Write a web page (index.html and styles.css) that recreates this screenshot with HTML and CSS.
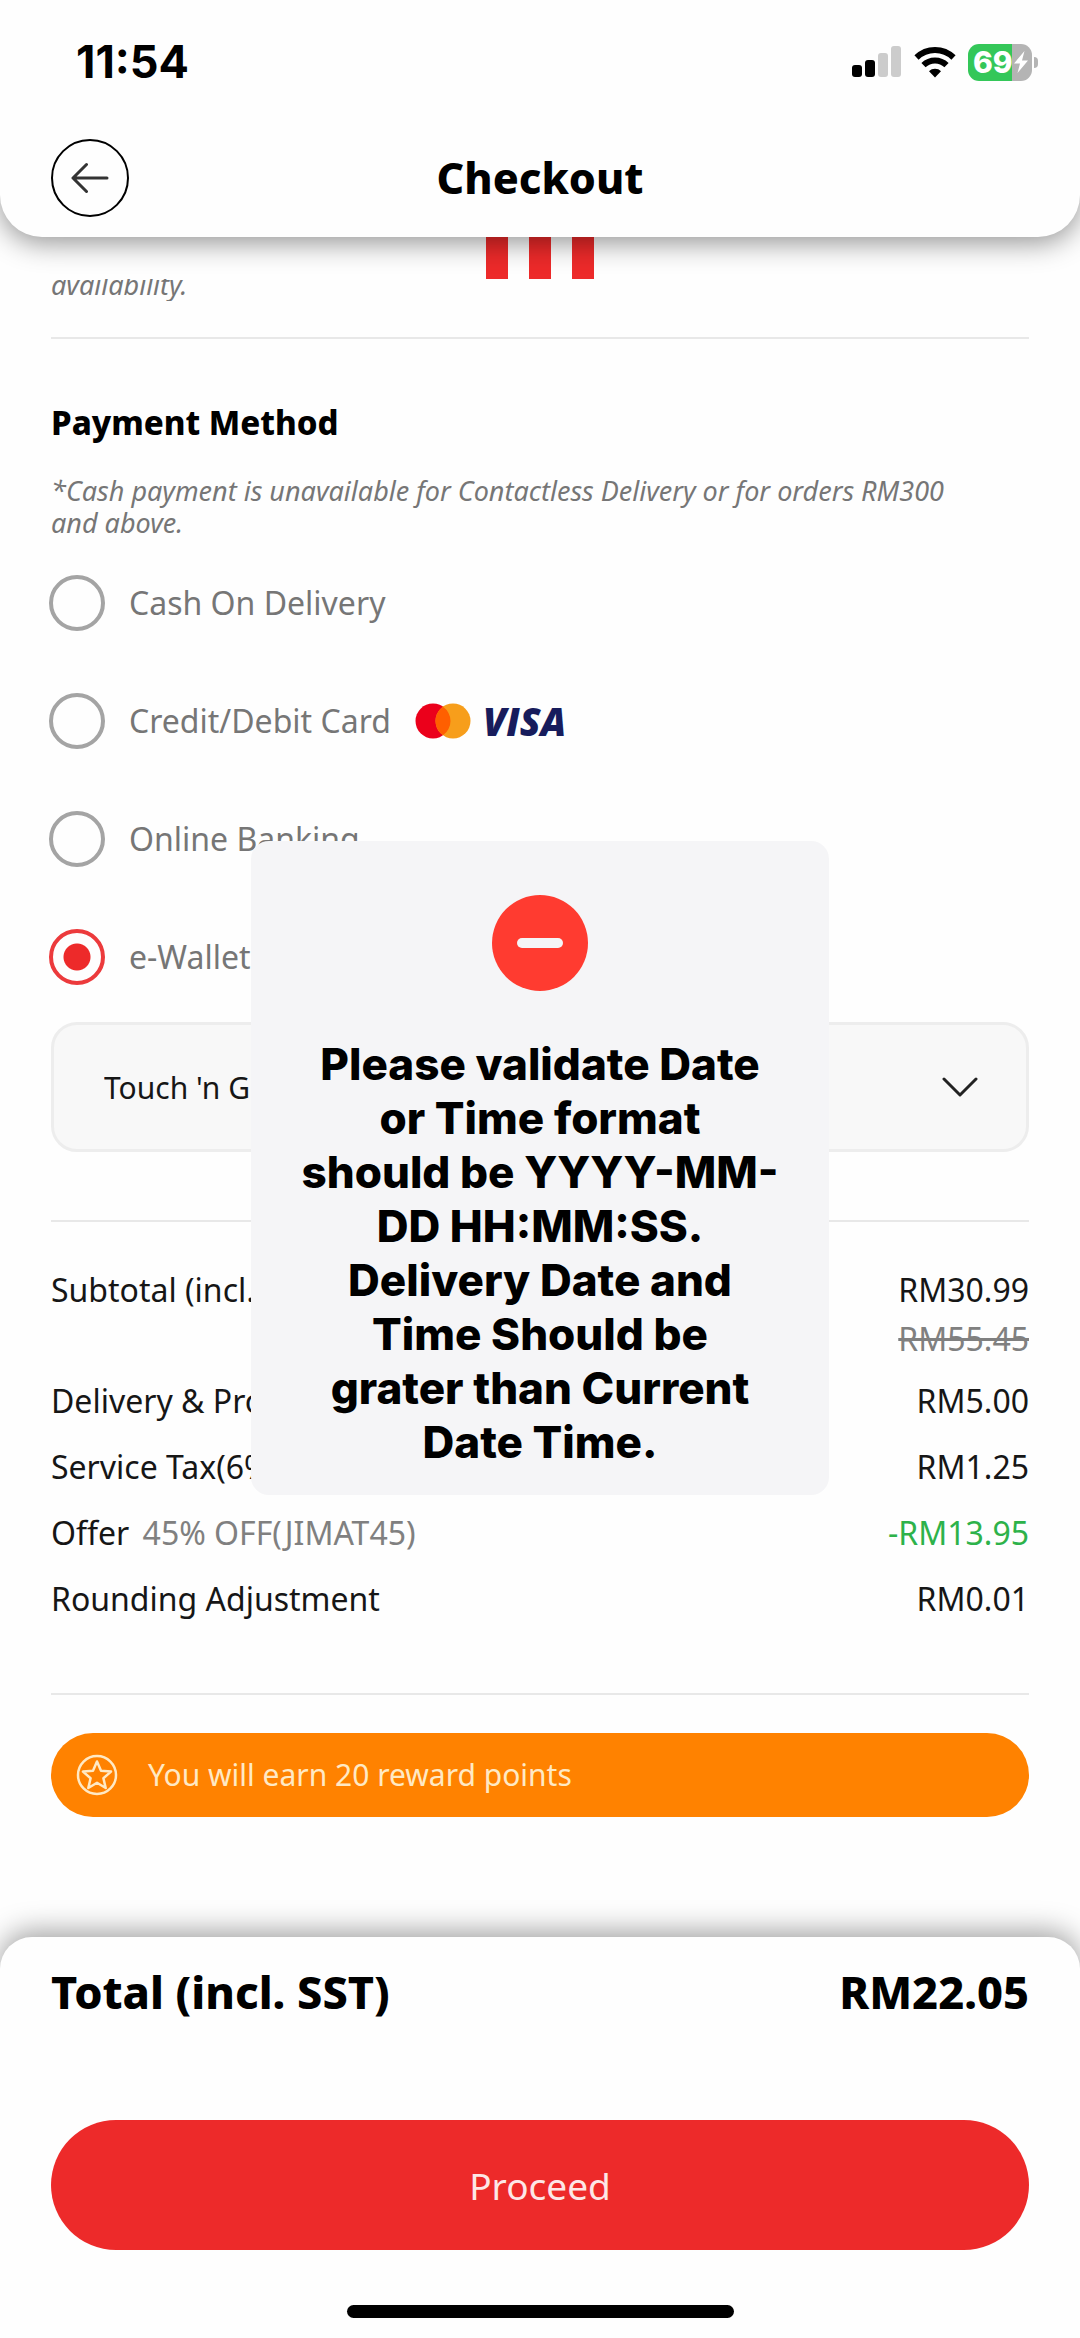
FILE: index.html
```html
<!DOCTYPE html>
<html lang="en">
<head>
<meta charset="utf-8">
<meta name="viewport" content="width=device-width, initial-scale=1">
<title>Checkout</title>
<link rel="stylesheet" href="styles.css">
</head>
<body>
<header class="header">
  <div class="status">
    <span class="time">11:54</span>
    <div class="indicators">
      <svg width="50" height="32" viewBox="0 0 50 32" aria-hidden="true">
        <rect x="0" y="19" width="10" height="12" rx="3"/>
        <rect x="13" y="14" width="10" height="17" rx="3"/>
        <rect x="26" y="7" width="10" height="24" rx="3" fill="#ccc"/>
        <rect x="39" y="0" width="10" height="31" rx="3" fill="#ccc"/>
      </svg>
      <svg class="wifi" width="42" height="32" viewBox="0 0 42 32" aria-hidden="true">
        <g fill="none" stroke="#000" stroke-width="6">
          <path d="M2.500 11.500a26.500 26.500 0 0 1 37 0"/>
          <path d="M9.500 19.200a16.500 16.500 0 0 1 23 0"/>
        </g>
        <path d="M21 31.500l-6-6.300c3-3.300 9-3.300 12 0z"/>
      </svg>
      <div class="battery">
        <span class="battery-level">69</span>
        <svg width="16" height="24" viewBox="0 0 16 24" aria-hidden="true"><path d="M11.500 1L1 13.500h6L4.500 23 15 10.500H9z" fill="#fff"/></svg>
      </div>
    </div>
  </div>
  <div class="titlebar">
    <button class="back" type="button" aria-label="Back">
      <svg width="38" height="32" viewBox="0 0 38 32" fill="none" stroke="#333" stroke-width="3" stroke-linecap="round" stroke-linejoin="round" aria-hidden="true"><path d="M36 16H2M15.500 2.500L2 16l13.500 13.500"/></svg>
    </button>
    <h1 class="title">Checkout</h1>
  </div>
</header>

<main class="content">
  <div class="brand" aria-hidden="true"><i></i><i></i><i></i></div>
  <div class="clipped"><p class="note">availability.</p></div>
  <hr class="rule">

  <section class="payment">
    <h2 class="heading">Payment Method</h2>
    <p class="note">*Cash payment is unavailable for Contactless Delivery or for orders RM300 and above.</p>
    <div class="options">
      <label class="option"><input class="radio" type="radio" name="pay">Cash On Delivery</label>
      <label class="option"><input class="radio" type="radio" name="pay">Credit/Debit Card
        <span class="cards">
          <svg width="56" height="36" viewBox="0 0 56 36" aria-hidden="true">
            <circle cx="18" cy="18" r="17.500" fill="#eb001b"/>
            <circle cx="38" cy="18" r="17.500" fill="#f79e1b"/>
            <path d="M28 3.640a17.500 17.500 0 0 1 0 28.720a17.500 17.500 0 0 1 0-28.720z" fill="#ff5f00"/>
          </svg>
          <span class="visa">VISA</span>
        </span>
      </label>
      <label class="option"><input class="radio" type="radio" name="pay">Online Banking</label>
      <label class="option"><input class="radio" type="radio" name="pay" checked>e-Wallet</label>
    </div>
    <div class="wallet">
      <select class="wallet-select" aria-label="e-Wallet provider"><option>Touch 'n Go eWallet</option></select>
      <svg class="chevron" width="36" height="20" viewBox="0 0 36 20" fill="none" stroke="#222" stroke-width="3" stroke-linecap="round" stroke-linejoin="round" aria-hidden="true"><path d="M2 2l16 16L34 2"/></svg>
    </div>
  </section>
  <hr class="rule">

  <dl class="summary">
    <div class="row"><dt>Subtotal (incl. SST)</dt><dd>RM30.99<s>RM55.45</s></dd></div>
    <div class="row"><dt>Delivery &amp; Processing</dt><dd>RM5.00</dd></div>
    <div class="row"><dt>Service Tax(6%)</dt><dd>RM1.25</dd></div>
    <div class="row"><dt>Offer <span class="muted">45% OFF(JIMAT45)</span></dt><dd class="discount">-RM13.95</dd></div>
    <div class="row"><dt>Rounding Adjustment</dt><dd>RM0.01</dd></div>
  </dl>
  <hr class="rule">

  <p class="reward">
    <svg width="42" height="42" viewBox="0 0 42 42" fill="none" stroke="#ffe9c4" stroke-width="2.500" stroke-linejoin="round" aria-hidden="true"><circle cx="21" cy="21" r="19"/><path d="M21 7.500l4 9.200 10 .9-7.600 6.600 2.300 9.800-8.700-5.200-8.700 5.200 2.300-9.800L7 17.600l10-.9z"/></svg>
    You will earn 20 reward points
  </p>
</main>

<footer class="footer">
  <div class="total"><span>Total (incl. SST)</span><span>RM22.05</span></div>
  <button class="proceed" type="button">Proceed</button>
  <div class="home"></div>
</footer>

<div class="overlay">
  <div class="alert" role="alertdialog" aria-labelledby="alert-text">
    <svg width="96" height="96" viewBox="0 0 96 96" aria-hidden="true"><circle cx="48" cy="48" r="48" fill="#ff3b30"/><rect x="25" y="43" width="46" height="10" rx="5" fill="#f5f5f7"/></svg>
    <p class="alert-text" id="alert-text">Please validate Date or Time format<br>should be YYYY-MM-<br>DD HH:MM:SS.<br>Delivery Date and<br>Time Should be<br>grater than Current Date Time.</p>
  </div>
</div>
</body>
</html>
```
FILE: styles.css
```css
* { box-sizing: border-box; }

body {
  margin: 0;
  min-height: 100vh;
  display: flex;
  flex-direction: column;
  background: #fefefe;
  color: #161616;
  font-family: "Noto Sans", sans-serif;
  font-size: 32px;
  line-height: 48px;
}

h1, h2, p, dl, dd { margin: 0; }
button, select { font-family: inherit; }

.header {
  position: relative;
  z-index: 2;
  background: #fefefe;
  border-radius: 0 0 42px 42px;
  box-shadow: 0 6px 28px rgba(0, 0, 0, 0.42);
  padding-bottom: 20px;
}

.status {
  display: flex;
  justify-content: space-between;
  align-items: center;
  padding: 37px 48px 0 76px;
  color: #000;
}
.time {
  font: 700 45px/50px Inter, sans-serif;
}
.indicators { display: flex; align-items: center; gap: 12px; }
.battery {
  position: relative;
  display: flex;
  align-items: center;
  width: 64px;
  height: 37px;
  padding-left: 5px;
  border-radius: 11px;
  background: linear-gradient(90deg, #34c759 69%, #b4b4b4 69%);
}
.battery::after {
  content: "";
  position: absolute;
  left: 66px;
  top: 13px;
  width: 4px;
  height: 11px;
  border-radius: 0 4px 4px 0;
  background: #b4b4b4;
}
.battery-level {
  color: #fff;
  font: 800 30px/37px Inter, sans-serif;
}

.titlebar {
  display: grid;
  grid-template-columns: 1fr auto 1fr;
  align-items: center;
  margin-top: 52px;
  padding: 0 51px;
}
.back {
  width: 78px;
  height: 78px;
  padding: 0;
  display: grid;
  place-items: center;
  border: 2px solid #000;
  border-radius: 50%;
  background: none;
}
.title {
  font-size: 43px;
  font-weight: 800;
  line-height: 56px;
  color: #000;
}

.content { padding: 0 51px; }
.brand {
  display: flex;
  justify-content: center;
  gap: 21px;
  height: 42px;
}
.brand i { width: 22px; background: #ed2a2a; }
.clipped {
  display: flex;
  align-items: flex-end;
  height: 22px;
  margin-bottom: 36px;
  overflow: hidden;
}
.rule {
  height: 2px;
  margin: 0;
  border: 0;
  background: #e8e8e8;
}
.note {
  color: #767676;
  font-size: 27px;
  line-height: 32px;
  font-style: italic;
}
.heading {
  margin: 58px 0 26px;
  font-size: 33px;
  font-weight: 800;
  line-height: 52px;
  color: #000;
}
.payment .note { max-width: 900px; }

.options {
  display: flex;
  flex-direction: column;
  gap: 62px;
  margin: 36px -2px 37px;
}
.option {
  display: flex;
  align-items: center;
  height: 56px;
  gap: 24px;
  color: #767676;
}
.radio {
  appearance: none;
  width: 56px;
  height: 56px;
  margin: 0;
  border: 4px solid #a4a4a4;
  border-radius: 50%;
}
.radio:checked {
  border-color: #ec3a3c;
  background: radial-gradient(circle, #ed2a2a 13px, transparent 14px);
}
.cards { display: flex; align-items: center; gap: 12px; }
.visa {
  color: #171c5c;
  font: italic 800 38px/36px "Open Sans", sans-serif;
}

.wallet { display: grid; align-items: center; }
.wallet-select {
  grid-area: 1 / 1;
  appearance: none;
  width: 100%;
  height: 130px;
  padding: 0 50px;
  border: 3px solid #ededed;
  border-radius: 26px;
  background: #f8f8f8;
  color: #161616;
  font-size: 30px;
}
.chevron {
  grid-area: 1 / 1;
  justify-self: end;
  margin-right: 51px;
  pointer-events: none;
}
.payment { margin-bottom: 68px; }

.summary {
  display: flex;
  flex-direction: column;
  gap: 18px;
  margin: 44px 0 70px;
}
.row { display: flex; justify-content: space-between; }
.row dd { text-align: right; }
.row s { display: block; margin-bottom: -5px; line-height: 50px; }
.row s, .muted { color: #808080; }
.muted { margin-left: 5px; }
.row .discount { color: #2db24a; }

.reward {
  display: flex;
  align-items: center;
  gap: 30px;
  height: 84px;
  margin-top: 38px;
  padding: 0 25px;
  border-radius: 42px;
  background: #ff8200;
  color: #ffe9c4;
  font-size: 30px;
}

.footer {
  margin-top: auto;
  padding: 31px 51px 20px;
  background: #fefefe;
  border-radius: 32px 32px 0 0;
  box-shadow: 0 -6px 28px rgba(0, 0, 0, 0.36);
}
.total {
  display: flex;
  justify-content: space-between;
  align-items: center;
  font-weight: 800;
  font-size: 45px;
  color: #000;
}
.proceed {
  display: block;
  width: 100%;
  height: 130px;
  margin: 104px 0 55px;
  border: 0;
  border-radius: 65px;
  background: #ed2a2a;
  color: #fde7e7;
  font-size: 37px;
}
.home {
  width: 387px;
  height: 13px;
  margin: 0 auto;
  border-radius: 7px;
  background: #000;
}

.overlay {
  position: fixed;
  inset: 0;
  z-index: 3;
  display: grid;
  place-items: center;
  padding-bottom: 2px;
}
.alert {
  display: flex;
  flex-direction: column;
  align-items: center;
  gap: 46px;
  width: 578px;
  padding: 54px 48px 26px;
  border-radius: 18px;
  background: #f5f5f7;
}
.alert-text {
  color: #000;
  font: 800 44px/54px Inter, sans-serif;
  text-align: center;
}
```
